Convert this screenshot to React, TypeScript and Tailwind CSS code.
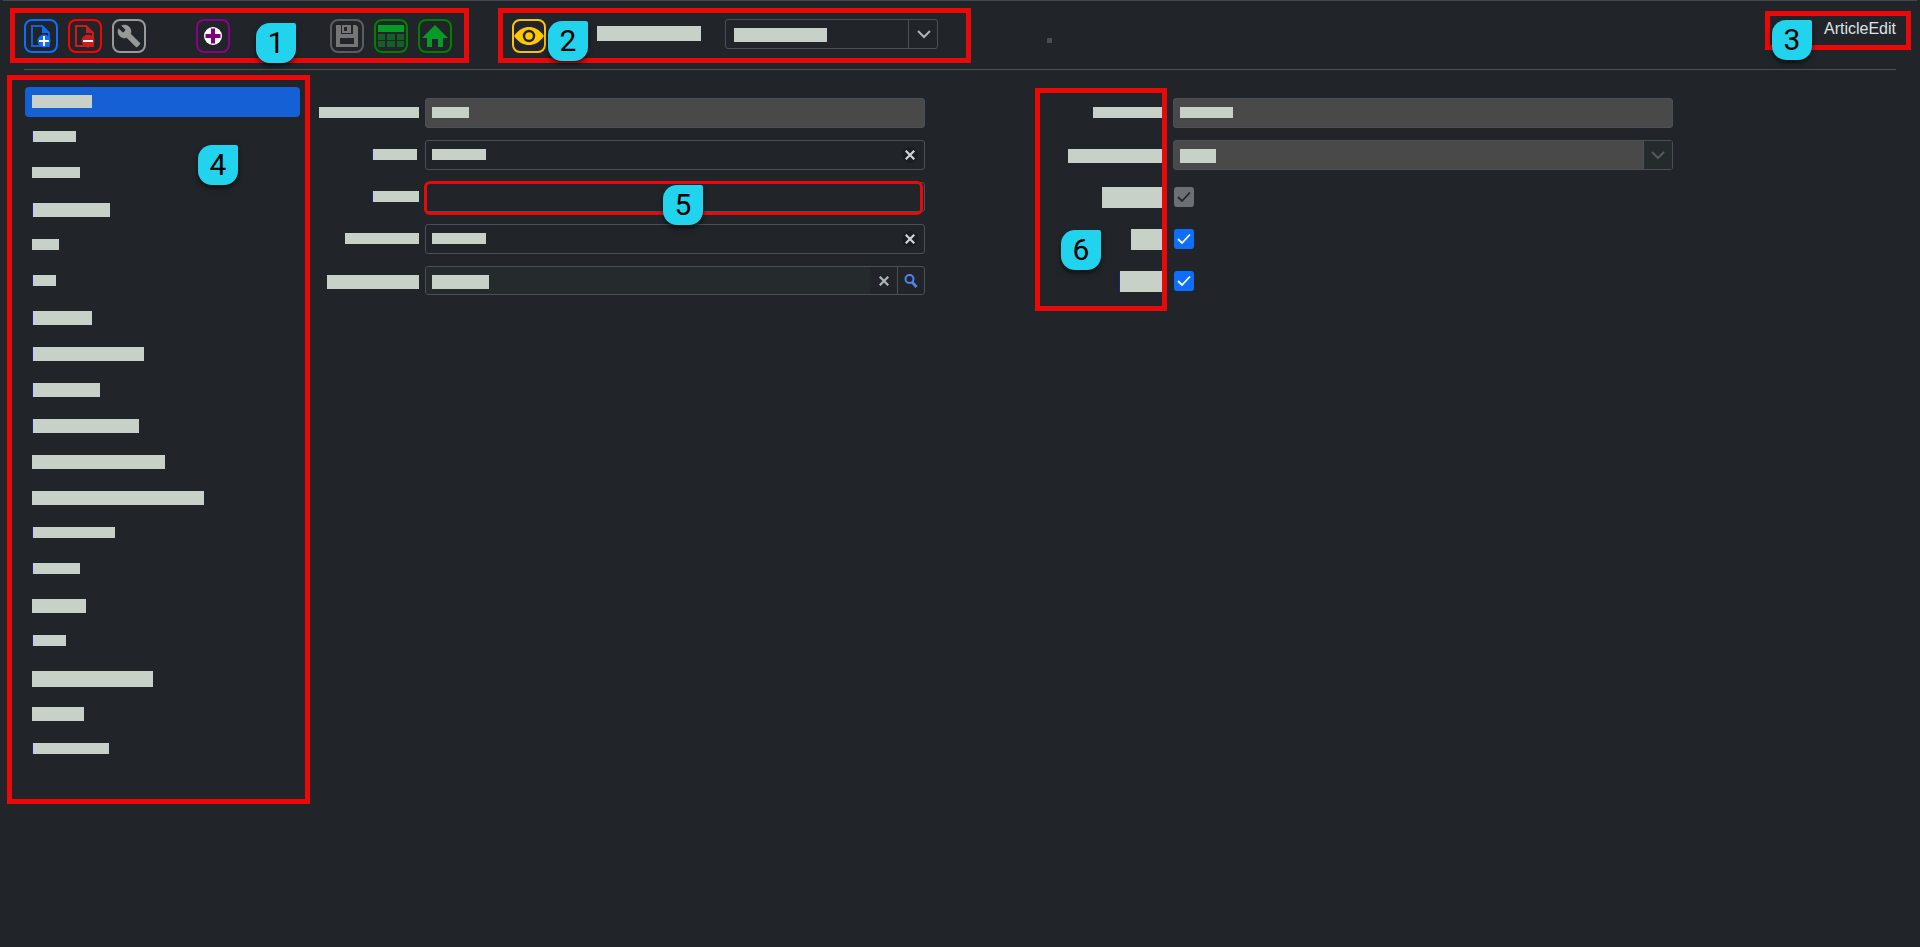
import type { ReactNode } from 'react'

const MENU = [
  { id: 'm1', bar: 'w-[60px] h-[13px]', edge: false },
  { id: 'm2', bar: 'w-[44px] h-[11px]', edge: true },
  { id: 'm3', bar: 'w-[48px] h-[11px]', edge: false },
  { id: 'm4', bar: 'w-[78px] h-[14px]', edge: true },
  { id: 'm5', bar: 'w-[27px] h-[11px]', edge: false },
  { id: 'm6', bar: 'w-[24px] h-[11px]', edge: true },
  { id: 'm7', bar: 'w-[60px] h-[14px]', edge: true },
  { id: 'm8', bar: 'w-[112px] h-[14px]', edge: true },
  { id: 'm9', bar: 'w-[68px] h-[14px]', edge: true },
  { id: 'm10', bar: 'w-[107px] h-[14px]', edge: true },
  { id: 'm11', bar: 'w-[133px] h-[14px]', edge: false },
  { id: 'm12', bar: 'w-[172px] h-[14px]', edge: false },
  { id: 'm13', bar: 'w-[83px] h-[11px]', edge: true },
  { id: 'm14', bar: 'w-[48px] h-[11px]', edge: true },
  { id: 'm15', bar: 'w-[54px] h-[14px]', edge: false },
  { id: 'm16', bar: 'w-[34px] h-[11px]', edge: true },
  { id: 'm17', bar: 'w-[121px] h-[16px]', edge: false },
  { id: 'm18', bar: 'w-[52px] h-[14px]', edge: false },
  { id: 'm19', bar: 'w-[77px] h-[11px]', edge: true },
]

// Redacted text
function Bar({ className, edge = false }: { className: string; edge?: boolean }) {
  return (
    <span className={`block shrink-0 bg-[#c7d1c8] ${edge ? 'border-l border-[#1f1f8f]' : ''} ${className}`} />
  )
}

function Tag({ n, className }: { n: number; className: string }) {
  return (
    <span
      className={`absolute z-20 grid place-items-center w-10 h-10 rounded-[14px] rounded-tr-[2px] bg-[#22d3ee] text-black font-[Roboto,sans-serif] text-[30px] leading-none shadow-[0_3px_5px_rgba(0,0,0,0.6)] ${className}`}
    >
      {n}
    </span>
  )
}

function ToolButton({ label, className, children }: { label: string; className: string; children: ReactNode }) {
  return (
    <button
      type="button"
      aria-label={label}
      className={`grid place-items-center shrink-0 w-[34px] h-[34px] rounded-lg border-2 ${className}`}
    >
      {children}
    </button>
  )
}

function Chevron() {
  return (
    <svg width="14" height="9" viewBox="0 0 14 9" fill="none" stroke="currentColor" strokeWidth="2">
      <path d="M1 1l6 6 6-6" />
    </svg>
  )
}

function Cross() {
  return (
    <svg width="10" height="10" viewBox="0 0 10 10" fill="none" stroke="currentColor" strokeWidth="2.2">
      <path d="M0.7 0.7l8.6 8.6M9.3 0.7L0.7 9.3" />
    </svg>
  )
}

function Row({ id, label, edge, children }: { id: string; label: string; edge?: boolean; children: ReactNode }) {
  return (
    <div className="flex h-[30px] gap-1.5">
      <label htmlFor={id} className="flex justify-end w-[109px] shrink-0 pt-[9px]">
        <Bar className={label} edge={edge} />
      </label>
      {children}
    </div>
  )
}

function TextField({ id, value, disabled, clearable }: { id: string; value?: string; disabled?: boolean; clearable?: boolean }) {
  return (
    <div className="relative flex-1 min-w-0">
      <input
        id={id}
        type="text"
        disabled={disabled}
        className={`block w-full h-[30px] px-2 rounded-[3px] border border-[#495057] outline-none ${
          disabled ? 'bg-[#494949]' : 'bg-transparent'
        }`}
      />
      {value && <Bar className={`absolute left-[7px] top-[9px] pointer-events-none ${value}`} />}
      {clearable && (
        <button
          type="button"
          aria-label="Clear"
          className="absolute right-[7px] top-[7px] grid place-items-center w-4 h-4 rounded-full bg-[#1b1e21] text-[#ced4da]"
        >
          <Cross />
        </button>
      )}
    </div>
  )
}

function CheckField({ id, disabled }: { id: string; disabled?: boolean }) {
  return (
    <div className="relative flex-1 pt-[5px] pl-px">
      <input
        id={id}
        type="checkbox"
        defaultChecked
        disabled={disabled}
        className={`block appearance-none w-5 h-5 rounded-[3px] ${disabled ? 'bg-[#6c7074]' : 'bg-[#0d6efd]'}`}
      />
      <svg
        className={`absolute left-1 top-[9px] pointer-events-none ${disabled ? 'text-[#212529]' : 'text-white'}`}
        width="14" height="12" viewBox="0 0 14 12" fill="none" stroke="currentColor" strokeWidth="1.8"
      >
        <path d="M1 6l4 4 8-8.5" />
      </svg>
    </div>
  )
}

export default function App() {
  return (
    <div className="min-h-screen bg-[#212529] text-[#dee2e6] font-['Liberation_Sans',Arial,sans-serif]">
      <div className="mx-[3px] h-px bg-[#43474b]" />

      <header className="flex items-start justify-between pt-[7px] pl-2.5 pr-[9px]">
        <div className="flex gap-[29px]">
          {/* Record actions */}
          <div className="relative flex gap-2.5 w-[459px] h-[55px] border-[5px] border-[#eb0808] pt-1.5 pl-[9px]">
            <ToolButton label="New" className="border-[#0d6efd]">
              <svg width="22" height="24" viewBox="0 0 22 24">
                <path d="M2 2h10l7 7v13H2z" fill="none" stroke="#1560d8" strokeWidth="2" />
                <path d="M12 1l8 8h-8z" fill="#0d6efd" />
                <circle cx="14" cy="17" r="6.5" fill="#0d6efd" />
                <path d="M14 12v10M9 17h10" stroke="#fff" strokeWidth="2" />
              </svg>
            </ToolButton>
            <ToolButton label="Delete" className="border-[#ff0000]">
              <svg width="22" height="24" viewBox="0 0 22 24">
                <path d="M2 2h10l7 7v13H2z" fill="none" stroke="#cf1b1b" strokeWidth="2" />
                <path d="M12 1l8 8h-8z" fill="#cf1b1b" />
                <circle cx="14" cy="17" r="6.5" fill="#cf1b1b" />
                <path d="M9 17h10" stroke="#fff" strokeWidth="2" />
              </svg>
            </ToolButton>
            <ToolButton label="Tools" className="border-[#999999]">
              <svg width="24" height="24" viewBox="0 0 24 24" fill="#999999" stroke="#999999" strokeWidth="0.6">
                <path d="M22.7 19l-9.1-9.1c.9-2.3.4-5-1.5-6.9-2-2-5-2.4-7.4-1.3L9 6 6 9 1.6 4.7C.4 7.1.9 10.1 2.9 12.1c1.9 1.9 4.6 2.4 6.9 1.5l9.1 9.1c.4.4 1 .4 1.4 0l2.3-2.3c.5-.4.5-1.1.1-1.4z" />
              </svg>
            </ToolButton>
            <ToolButton label="Add" className="ml-10 border-[#8b008b]">
              <svg width="18" height="18" viewBox="0 0 18 18">
                <circle cx="9" cy="9" r="9" fill="#fff" />
                <path d="M9 1.5v15M1.5 9h15" stroke="#800080" strokeWidth="4" />
              </svg>
            </ToolButton>
            <ToolButton label="Save" className="ml-[90px] border-[#5c5c5c]">
              <svg width="24" height="24" viewBox="0 0 24 24">
                <path fillRule="evenodd" d="M1 1h20l2 2v20H1zM5 14v6h14v-6zM6 1h12v9H6z" fill="#757575" />
                <path fillRule="evenodd" d="M7 1h9v8H7zM9 3v4h3V3z" fill="#757575" />
              </svg>
            </ToolButton>
            <ToolButton label="Table" className="border-[#008000]">
              <svg width="26" height="24" viewBox="0 0 26 24">
                <path d="M0 1h26v7H0z" fill="#069b26" />
                <path d="M0 10h7v6H0zM9 10h8v6H9zM19 10h7v6h-7zM0 17h7v6H0zM9 17h8v6H9zM19 17h7v6h-7z" fill="#145f25" />
              </svg>
            </ToolButton>
            <ToolButton label="Home" className="border-[#008000]">
              <svg width="26" height="24" viewBox="0 0 26 24" fill="#069b26">
                <path d="M13 1l13 13h-5v9h-5v-8h-6v8H5v-9H0z" />
              </svg>
            </ToolButton>
            <Tag n={1} className="left-[241px] top-2.5" />
          </div>

          {/* View selection */}
          <div className="relative flex w-[473px] h-[55px] border-[5px] border-[#eb0808] pt-1.5 pl-[9px]">
            <ToolButton label="Show" className="border-[#ffc107]">
              <svg width="30" height="18" viewBox="0 0 30 18">
                <path d="M0 9C5 2 10 0 15 0s10 2 15 9c-5 7-10 9-15 9S5 16 0 9z" fill="#ffc800" />
                <circle cx="15" cy="9" r="5" fill="none" stroke="#212529" strokeWidth="2.5" />
              </svg>
            </ToolButton>
            <label htmlFor="view" className="ml-[51px] pt-[7px]">
              <Bar className="w-[104px] h-[15px]" />
            </label>
            <div className="relative ml-6 w-[213px] h-[30px]">
              <select
                id="view"
                className="block w-full h-full appearance-none rounded-[3px] border border-[#495057] bg-transparent outline-none"
              />
              <Bar className="absolute left-[9px] top-[9px] w-[93px] h-[14px] pointer-events-none" />
              <span className="absolute right-0 inset-y-0 grid place-items-center w-[30px] border-l border-[#495057] text-[#adb5bd] pointer-events-none">
                <Chevron />
              </span>
            </div>
            <Tag n={2} className="left-[45px] top-2" />
          </div>

          <span className="ml-[47px] mt-[30px] w-[5px] h-[5px] bg-[#4a4d50]" />
        </div>

        <div className="relative flex justify-end w-[146px] h-[39px] mt-[3px] border-[5px] border-[#eb0808] pt-[3px] pr-2.5">
          <h1 className="text-base leading-5">ArticleEdit</h1>
          <Tag n={3} className="left-0.5 top-1" />
        </div>
      </header>

      <div className="mx-6 mt-1.5 h-px bg-[#4d5154]" />

      <main className="flex items-start pt-[5px] pl-[7px]">
        <nav
          aria-label="Sections"
          className="relative flex flex-col gap-1.5 w-[303px] shrink-0 border-[5px] border-[#eb0808] pt-[7px] pl-[13px] pr-[5px] pb-[34px]"
        >
          {MENU.map((item, i) => (
            <a
              key={item.id}
              href={`#${item.id}`}
              className={`block h-[30px] pt-2 pl-[7px] rounded-[4px] ${i === 0 ? 'bg-[#1460d4]' : ''}`}
            >
              <Bar className={item.bar} edge={item.edge} />
            </a>
          ))}
          <Tag n={4} className="left-[186px] top-[65px]" />
        </nav>

        <form className="flex flex-1 gap-[133px] pt-[23px] pr-[247px]">
          <div className="relative flex flex-1 flex-col gap-3">
            <Row id="f1" label="w-[100px] h-[11px]">
              <TextField id="f1" value="w-[37px] h-[11px]" disabled />
            </Row>
            <Row id="f2" label="w-[45px] h-[11px] mr-0.5" edge>
              <TextField id="f2" value="w-[54px] h-[11px]" clearable />
            </Row>
            <Row id="f3" label="w-[47px] h-[11px]" edge>
              <div className="relative flex flex-1">
                <TextField id="f3" />
                <span className="absolute -left-px -top-px right-0.5 h-[34px] rounded-md border-[3px] border-[#eb0808] pointer-events-none" />
                <Tag n={5} className="left-[238px] top-[3px]" />
              </div>
            </Row>
            <Row id="f4" label="w-[74px] h-[11px]">
              <TextField id="f4" value="w-[54px] h-[11px]" clearable />
            </Row>
            <Row id="f5" label="w-[92px] h-[14px]">
              <div className="relative flex flex-1 h-[29px] rounded-[3px] border border-[#495057] overflow-hidden">
                <input id="f5" type="text" className="flex-1 min-w-0 bg-[#252a2d] outline-none" />
                <Bar className="absolute left-1.5 top-2 w-[57px] h-[14px] pointer-events-none" />
                <button type="button" aria-label="Clear" className="grid place-items-center w-[27px] text-[#adb5bd]">
                  <Cross />
                </button>
                <button type="button" aria-label="Search" className="grid place-items-center w-[27px] border-l border-[#495057] text-[#4f83f1]">
                  <svg width="14" height="14" viewBox="0 0 14 14" fill="none" stroke="currentColor">
                    <circle cx="5.5" cy="5" r="4" strokeWidth="2" />
                    <path d="M8 8l4.5 5" strokeWidth="2.8" />
                  </svg>
                </button>
              </div>
            </Row>
          </div>

          <div className="relative flex flex-1 flex-col gap-3">
            <Row id="g1" label="w-[74px] h-[11px]">
              <TextField id="g1" value="w-[53px] h-[11px]" disabled />
            </Row>
            <Row id="g2" label="w-[99px] h-[14px]">
              <div className="relative flex-1">
                <select
                  id="g2"
                  disabled
                  className="block w-full h-[30px] appearance-none rounded-[3px] border border-[#495057] bg-[#494949] opacity-100"
                />
                <Bar className="absolute left-[7px] top-[9px] w-9 h-[14px]" />
                <span className="absolute right-px inset-y-px grid place-items-center w-[29px] border-l border-[#495057] bg-[#252a2d] text-[#55595d] pointer-events-none">
                  <Chevron />
                </span>
              </div>
            </Row>
            <Row id="g3" label="w-[65px] h-[21px] -mt-1">
              <CheckField id="g3" disabled />
            </Row>
            <Row id="g4" label="w-[36px] h-[21px] -mt-1">
              <CheckField id="g4" />
            </Row>
            <Row id="g5" label="w-[48px] h-[21px] -mt-1" edge>
              <CheckField id="g5" />
            </Row>
            <div className="absolute -left-[23px] -top-2.5 w-[132px] h-[223px] border-[5px] border-[#eb0808] pointer-events-none">
              <Tag n={6} className="left-[21px] top-[137px]" />
            </div>
          </div>
        </form>
      </main>
    </div>
  )
}
